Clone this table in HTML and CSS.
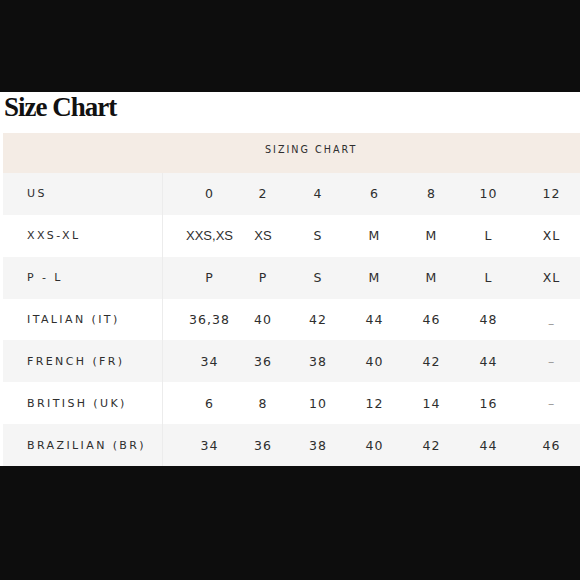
FILE: index.html
```html
<!DOCTYPE html>
<html>
<head>
<meta charset="utf-8">
<link rel="stylesheet" href="styles.css">
</head>
<body>
<div class="top"></div>
<div class="panel">
  <h1 class="title">Size Chart</h1>
  <div class="band">SIZING CHART</div>
  <div class="row gray">
    <div class="label">US</div>
    <div class="c c1">0</div><div class="c">2</div><div class="c">4</div><div class="c">6</div><div class="c">8</div><div class="c">10</div><div class="c c7">12</div>
  </div>
  <div class="row">
    <div class="label">XXS-XL</div>
    <div class="c c1 alt">XXS,XS</div><div class="c alt">XS</div><div class="c">S</div><div class="c">M</div><div class="c">M</div><div class="c">L</div><div class="c c7">XL</div>
  </div>
  <div class="row gray">
    <div class="label">P - L</div>
    <div class="c c1">P</div><div class="c">P</div><div class="c">S</div><div class="c">M</div><div class="c">M</div><div class="c">L</div><div class="c c7">XL</div>
  </div>
  <div class="row">
    <div class="label">ITALIAN (IT)</div>
    <div class="c c1">36,38</div><div class="c">40</div><div class="c">42</div><div class="c">44</div><div class="c">46</div><div class="c">48</div><div class="c c7 dash low">–</div>
  </div>
  <div class="row gray">
    <div class="label">FRENCH (FR)</div>
    <div class="c c1">34</div><div class="c">36</div><div class="c">38</div><div class="c">40</div><div class="c">42</div><div class="c">44</div><div class="c c7 dash">–</div>
  </div>
  <div class="row">
    <div class="label">BRITISH (UK)</div>
    <div class="c c1">6</div><div class="c">8</div><div class="c">10</div><div class="c">12</div><div class="c">14</div><div class="c">16</div><div class="c c7 dash">–</div>
  </div>
  <div class="row gray">
    <div class="label">BRAZILIAN (BR)</div>
    <div class="c c1">34</div><div class="c">36</div><div class="c">38</div><div class="c">40</div><div class="c">42</div><div class="c">44</div><div class="c c7">46</div>
  </div>
</div>
</body>
</html>
```

FILE: styles.css
```css
html, body {
  margin: 0;
  padding: 0;
  background: #0d0d0d;
  width: 580px;
  height: 580px;
  overflow: hidden;
}
.top {
  height: 92px;
}
.panel {
  background: #ffffff;
  height: 374px;
  padding-left: 3px;
  box-sizing: border-box;
}
.title {
  margin: 0;
  height: 41px;
  padding-left: 1px;
  font-family: "Liberation Serif", serif;
  font-weight: bold;
  font-size: 27px;
  letter-spacing: -1px;
  line-height: 31px;
  color: #111;
}
.band {
  height: 40px;
  background: #f4ece5;
  font-family: "DejaVu Sans", sans-serif;
  font-size: 9.6px;
  letter-spacing: 2px;
  color: #2e2e2e;
  line-height: 33px;
  padding-left: 262px;
}
.row {
  display: grid;
  grid-template-columns: 160px 73px 54px 56px 57px 57px 57px 63px;
  height: 41.86px;
  align-items: center;
  font-family: "DejaVu Sans", sans-serif;
  color: #2e2e2e;
}
.row.gray {
  background: #f5f5f5;
}
.label {
  height: 100%;
  display: flex;
  align-items: center;
  padding-left: 24px;
  font-size: 11px;
  letter-spacing: 2.4px;
  border-right: 1px solid #ececec;
  box-sizing: border-box;
}
.c {
  text-align: center;
  font-size: 12.5px;
  letter-spacing: 1px;
}
.c.alt {
  letter-spacing: 0;
  font-family: "Liberation Sans", sans-serif;
  font-size: 13px;
}
.c1 {
  padding-left: 20px;
}
.c7 {
  padding-left: 6px;
}
.dash {
  color: #999;
}
.low {
  padding-top: 8px;
}
```
